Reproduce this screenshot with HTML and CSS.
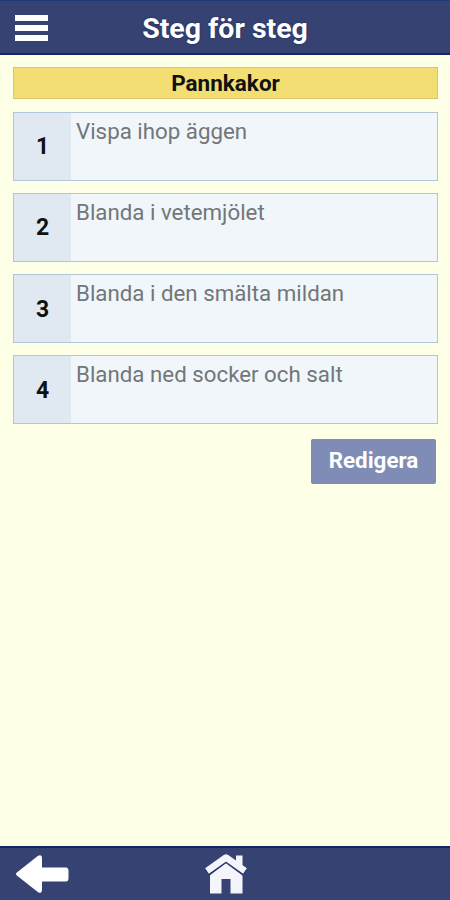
FILE: index.html
```html
<!DOCTYPE html>
<html lang="sv">
<head>
    <meta charset="UTF-8">
    <meta name="viewport" content="width=device-width, initial-scale=1.0">
    <title>Steg för steg</title>
    <link rel="stylesheet" href="styles.css">
</head>
<body>
    <header class="top-bar">
        <button class="menu-btn" aria-label="Meny">
            <span></span>
            <span></span>
            <span></span>
        </button>
        <h1>Steg för steg</h1>
    </header>

    <main class="content">
        <h2 class="recipe-title">Pannkakor</h2>

        <ol class="steps">
            <li class="step">
                <span class="step-number">1</span>
                <p class="step-text">Vispa ihop äggen</p>
            </li>
            <li class="step">
                <span class="step-number">2</span>
                <p class="step-text">Blanda i vetemjölet</p>
            </li>
            <li class="step">
                <span class="step-number">3</span>
                <p class="step-text">Blanda i den smälta mildan</p>
            </li>
            <li class="step">
                <span class="step-number">4</span>
                <p class="step-text">Blanda ned socker och salt</p>
            </li>
        </ol>

        <button class="edit-btn">Redigera</button>
    </main>

    <footer class="bottom-bar">
        <a href="#" class="back" aria-label="Tillbaka">
            <svg width="56" height="42" viewBox="0 0 56 42">
                <path d="M3.500 21 L25 4 Q26.500 3 26.500 5 V16 H52 Q53 16 53 18 V25 Q53 27 52 27 H26.500 V37 Q26.500 39 25 38 Z" fill="#fff" stroke="#fff" stroke-width="3" stroke-linejoin="round"/>
            </svg>
        </a>
        <a href="#" class="home" aria-label="Hem">
            <svg width="44" height="42" viewBox="0 0 44 42">
                <path d="M33 2.500 H39.500 V16 L33 10.500 Z" fill="#f3f5fb"/>
                <path d="M7 22 L23 9.500 L39.500 22 V40.500 H27.500 V26 H18.500 V40.500 H7 Z" fill="#f3f5fb"/>
                <path d="M4 20 L23 6 L42 20" fill="none" stroke="#27346a" stroke-width="7"/>
                <path d="M4 18 L23 4.500 L42 18" fill="none" stroke="#f3f5fb" stroke-width="6.500" stroke-linejoin="round"/>
            </svg>
        </a>
    </footer>
</body>
</html>
```

FILE: styles.css
```css
* {
    margin: 0;
    padding: 0;
    box-sizing: border-box;
}

body {
    background-color: #fdffe7;
    font-family: Roboto, 'Liberation Sans', sans-serif;
    display: flex;
    flex-direction: column;
    height: 100vh;
}

button {
    border: none;
    font-family: inherit;
    cursor: pointer;
}

.top-bar {
    height: 55px;
    padding: 0 15px;
    background-color: #364272;
    border-top: 1px solid #1d3a7b;
    border-bottom: 2px solid #162563;
    display: grid;
    grid-template-columns: 33px 1fr 33px;
    align-items: center;
}

.top-bar h1 {
    padding-top: 3px;
    color: #fff;
    font-size: 28.5px;
    font-weight: 700;
    line-height: 49px;
    text-align: center;
    text-shadow: 0 0 2px #1c2758;
}

.menu-btn {
    padding-top: 2px;
    background: none;
    display: flex;
    flex-direction: column;
    gap: 4px;
}

.menu-btn span {
    height: 6px;
    background-color: #fff;
}

.content {
    flex: 1;
    padding: 12px 12px 0 13px;
    display: flex;
    flex-direction: column;
}

.recipe-title {
    height: 32px;
    background-color: #f3de73;
    border: 1px solid #d8c76f;
    color: #111;
    font-size: 22.5px;
    font-weight: 700;
    line-height: 30px;
    text-align: center;
    margin-bottom: 12.5px;
}

.steps {
    list-style: none;
    display: flex;
    flex-direction: column;
    gap: 12.3px;
}

.step {
    height: 69px;
    background-color: #f0f6fa;
    border: 1px solid #b2c6d9;
    display: flex;
}

.step-number {
    width: 57px;
    padding-top: 1px;
    background-color: #e0e9f1;
    color: #111;
    font-size: 23px;
    font-weight: 700;
    display: flex;
    align-items: center;
    justify-content: center;
}

.step-text {
    padding: 4px 5px;
    color: #737678;
    font-size: 22.3px;
    line-height: 28px;
}

.edit-btn {
    align-self: flex-end;
    width: 125px;
    height: 45px;
    margin: 14.5px 2px 0 0;
    padding-bottom: 2px;
    background-color: #7f8cb5;
    border-radius: 2px;
    color: #fff;
    font-size: 22.4px;
    font-weight: 700;
}

.bottom-bar {
    height: 54px;
    padding: 0 14px;
    background-color: #364272;
    border-top: 2px solid #162563;
    display: grid;
    grid-template-columns: 1fr auto 1fr;
    align-items: center;
}

.bottom-bar a,
.bottom-bar svg {
    display: block;
}
```
